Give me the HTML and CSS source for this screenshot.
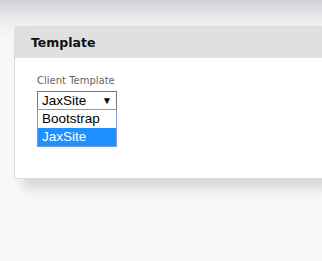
FILE: index.html
```html
<!DOCTYPE html>
<html lang="en">
<head>
  <meta charset="UTF-8">
  <title>Template</title>
  <link rel="stylesheet" href="styles.css">
</head>
<body>
  <div class="page">
    <div class="panel">
      <div class="panel-head">Template</div>
      <div class="panel-body">
        <label class="field-label">Client Template</label>
        <div class="select-wrap">
          <div class="select-box">
            <span>JaxSite</span>
            <span class="arrow">&#9660;</span>
          </div>
          <ul class="select-list">
            <li>Bootstrap</li>
            <li class="selected">JaxSite</li>
          </ul>
        </div>
      </div>
    </div>
  </div>
</body>
</html>
```

FILE: styles.css
```css
html, body {
  margin: 0;
  height: 100%;
}

body {
  background: linear-gradient(#d0d0d5 0, #e4e4e7 14px, #f1f1f1 26px, #f8f8f8 40px) no-repeat, #f8f8f8;
  overflow: hidden;
}

.page {
  padding: 26px 0 0 14px;
}

.panel {
  background: #fff;
  border: 1px solid #dcdcdc;
  border-right: none;
  border-radius: 3px 0 0 3px;
  box-shadow: 8px 10px 12px rgba(0, 0, 0, 0.13);
}

.panel-head {
  background: #e0e0e0;
  height: 31px;
  line-height: 32px;
  padding-left: 16px;
  font-family: "DejaVu Sans", Verdana, sans-serif;
  font-weight: bold;
  font-size: 12.5px;
  color: #111;
}

.panel-body {
  padding: 17px 0 0 22px;
  height: 103px;
}

.field-label {
  display: block;
  font-family: "DejaVu Sans", Verdana, sans-serif;
  font-size: 10px;
  color: #666;
  margin-bottom: 5px;
}

.select-wrap {
  position: relative;
  width: 80px;
}

.select-box {
  box-sizing: border-box;
  height: 19px;
  border: 1px solid #777;
  display: flex;
  justify-content: space-between;
  align-items: center;
  padding: 0 4px 0 4px;
  font-family: "Liberation Sans", Arial, sans-serif;
  font-size: 13.5px;
  color: #000;
}

.arrow {
  font-size: 10px;
}

.select-list {
  position: absolute;
  top: 18px;
  left: 0;
  width: 80px;
  box-sizing: border-box;
  margin: 0;
  padding: 0;
  list-style: none;
  border: 1px solid #7a9cd3;
  background: #fff;
  font-family: "Liberation Sans", Arial, sans-serif;
  font-size: 13.5px;
}

.select-list li {
  height: 18px;
  line-height: 18px;
  padding-left: 4px;
}

.select-list .selected {
  background: #1e90ff;
  color: #fff;
}
```
